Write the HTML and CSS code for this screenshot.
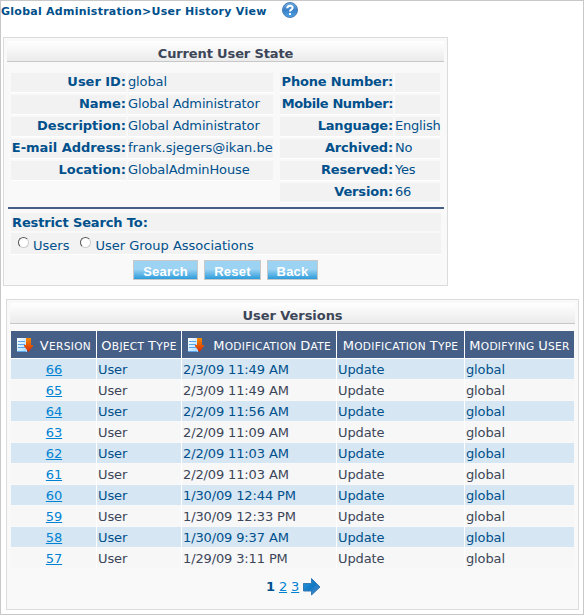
FILE: index.html
```html
<!DOCTYPE html>
<html lang="en">
<head>
<meta charset="utf-8">
<title>User History View</title>
<link rel="stylesheet" href="styles.css">
</head>
<body>
<svg width="0" height="0" class="defs">
  <defs>
    <linearGradient id="orange" x1="0" y1="0" x2="0" y2="1"><stop offset="0" stop-color="#f08a00"/><stop offset="1" stop-color="#d92800"/></linearGradient>
    <linearGradient id="sheet" x1="0" y1="0" x2="1" y2="1"><stop offset="0" stop-color="#ffffff"/><stop offset="1" stop-color="#a5d6fa"/></linearGradient>
    <linearGradient id="blue" x1="0" y1="0" x2="1" y2="1"><stop offset="0" stop-color="#2b9be0"/><stop offset=".5" stop-color="#1279c4"/><stop offset="1" stop-color="#5b8fd0"/></linearGradient>
    <linearGradient id="ball" x1="0" y1="0" x2="0" y2="1"><stop offset="0" stop-color="#74b0e4"/><stop offset=".5" stop-color="#3a80c8"/><stop offset="1" stop-color="#4fa6e4"/></linearGradient>
    <symbol id="sort" viewBox="0 0 16 15">
      <path d="M0 0h10v14H0z" fill="url(#sheet)"/>
      <path d="M1 3.500h7M1 6.500h7M1 9.500h7M0 13.500h9" stroke="#5aa5ea"/>
      <path d="M9 0h5v7h2v1l-4.500 6-4.500-6v-1h2z" fill="url(#orange)"/>
    </symbol>
  </defs>
</svg>
<div class="page">
  <header class="crumbs">
    <span class="trail">Global Administration&gt;User History View</span>
    <svg class="help" width="16" height="16" viewBox="0 0 16 16"><circle cx="8" cy="8" r="7.500" fill="url(#ball)" stroke="#4c7db5"/><path d="M5.300 6.200C5.300 2.800 10.800 3 10.600 6 10.400 7.700 8 7.700 8 9.600" fill="none" stroke="#fff" stroke-width="2"/><path d="M7 11h2v2H7z" fill="#fff"/></svg>
  </header>

  <section class="panel state">
    <h2 class="title">Current User State</h2>
    <div class="details">
      <dl class="fields left">
        <dt>User ID:</dt><dd>global</dd>
        <dt>Name:</dt><dd>Global Administrator</dd>
        <dt>Description:</dt><dd>Global Administrator</dd>
        <dt>E-mail Address:</dt><dd class="mail">frank.sjegers@ikan.be</dd>
        <dt>Location:</dt><dd>GlobalAdminHouse</dd>
      </dl>
      <dl class="fields right">
        <dt>Phone Number:</dt><dd></dd>
        <dt class="mobile">Mobile Number:</dt><dd></dd>
        <dt>Language:</dt><dd>English</dd>
        <dt>Archived:</dt><dd>No</dd>
        <dt>Reserved:</dt><dd>Yes</dd>
        <dt>Version:</dt><dd>66</dd>
      </dl>
    </div>
    <div class="search">
      <div class="restrict">Restrict Search To:</div>
      <div class="options">
        <label><input type="radio" name="scope">Users</label>
        <label><input type="radio" name="scope">User Group Associations</label>
      </div>
      <div class="buttons">
        <button class="b-search">Search</button><button class="b-reset">Reset</button><button class="b-back">Back</button>
      </div>
    </div>
  </section>

  <section class="panel versions">
    <h2 class="title">User Versions</h2>
    <table>
      <colgroup><col class="c1"><col class="c2"><col class="c3"><col class="c4"><col class="c5"></colgroup>
      <thead><tr>
        <th><div class="sortable"><svg width="16" height="15"><use href="#sort"/></svg><span><span class="word">Version</span></span></div></th>
        <th><span class="word">Object</span> <span class="word">Type</span></th>
        <th><div class="sortable"><svg width="16" height="15"><use href="#sort"/></svg><span><span class="word">Modification</span> <span class="word">Date</span></span></div></th>
        <th><span class="word">Modification</span> <span class="word">Type</span></th>
        <th><span class="word">Modifying</span> <span class="word">User</span></th>
      </tr></thead>
      <tbody>
        <tr><td><a href="#">66</a></td><td>User</td><td>2/3/09 11:49 AM</td><td>Update</td><td>global</td></tr>
        <tr><td><a href="#">65</a></td><td>User</td><td>2/3/09 11:49 AM</td><td>Update</td><td>global</td></tr>
        <tr><td><a href="#">64</a></td><td>User</td><td>2/2/09 11:56 AM</td><td>Update</td><td>global</td></tr>
        <tr><td><a href="#">63</a></td><td>User</td><td>2/2/09 11:09 AM</td><td>Update</td><td>global</td></tr>
        <tr><td><a href="#">62</a></td><td>User</td><td>2/2/09 11:03 AM</td><td>Update</td><td>global</td></tr>
        <tr><td><a href="#">61</a></td><td>User</td><td>2/2/09 11:03 AM</td><td>Update</td><td>global</td></tr>
        <tr><td><a href="#">60</a></td><td>User</td><td>1/30/09 12:44 PM</td><td>Update</td><td>global</td></tr>
        <tr><td><a href="#">59</a></td><td>User</td><td>1/30/09 12:33 PM</td><td>Update</td><td>global</td></tr>
        <tr><td><a href="#">58</a></td><td>User</td><td>1/30/09 9:37 AM</td><td>Update</td><td>global</td></tr>
        <tr><td><a href="#">57</a></td><td>User</td><td>1/29/09 3:11 PM</td><td>Update</td><td>global</td></tr>
      </tbody>
    </table>
    <nav class="pager"><b>1</b><a href="#">2</a><a href="#">3</a><svg width="18" height="18" viewBox="0 0 18 18"><path d="M.5 5.500h8v-5l8.500 8.500-8.500 8v-4h-8z" fill="url(#blue)" stroke="#3579b5"/></svg></nav>
  </section>
</div>
</body>
</html>
```
FILE: styles.css
```css
* { box-sizing: border-box; }
body { margin: 0; background: #fff; color: #00508c; font: 13px/19px "DejaVu Sans", Verdana, sans-serif; letter-spacing: -0.13px; }
.defs { display: block; }
.page { height: 615px; border: 1px solid #c8c8c8; }
.crumbs { display: flex; height: 36px; align-items: flex-start; }
.trail { width: 281px; font-weight: bold; font-size: 11px; line-height: 21px; letter-spacing: 0.26px; white-space: nowrap; }
.help { margin-top: 1px; }
.panel { border: 1px solid #dcdcdc; background: #f9f9f9; padding: 3px; }
.state { width: 445px; height: 249px; margin-left: 2px; }
.versions { width: 573px; height: 311px; margin: 13px 0 0 5px; }
.title { margin: 0; height: 21px; border-bottom: 1px solid #c8c8c8; background: linear-gradient(#fff, #ebebeb); color: #3c4658; font-size: 13px; line-height: 26px; text-align: center; letter-spacing: -0.13px; }
.versions .title { letter-spacing: -0.05px; }
.details { display: flex; gap: 7px; align-items: flex-start; height: 145px; padding: 11px 0 0 4px; }
.fields { display: grid; margin: 0; grid-auto-rows: 20px; gap: 2px; white-space: nowrap; }
.left { grid-template-columns: 115px 145px; }
.right { grid-template-columns: 113px 45px; }
dt, dd { margin: 0; background: #f2f2f2; border-bottom: 1px solid #fff; line-height: 18px; }
dt { font-weight: bold; text-align: right; letter-spacing: -0.03px; }
.right dt { letter-spacing: -0.18px; }
.right .mobile { letter-spacing: -0.4px; }
.right dd { letter-spacing: -0.2px; }
.mail { letter-spacing: -0.02px; }
.search { margin-left: 1px; border-top: 2px solid #465f87; padding: 4px 3px 0; }
.restrict { height: 18px; background: #f2f2f2; padding-left: 1px; font-weight: bold; line-height: 19px; }
.options { display: flex; height: 22px; margin-top: 2px; padding-left: 7px; background: #f2f2f2; border-bottom: 1px solid #fff; line-height: 25px; gap: 11px; letter-spacing: 0; }
label { display: flex; gap: 4px; }
input { appearance: none; width: 11px; height: 11px; margin: 4px 0 0; border: 1px solid; border-color: #555 #ccc #ccc #555; border-radius: 50%; background: #fff; }
.buttons { display: flex; gap: 6px; padding: 5px 0 0 122px; }
button { height: 20px; padding: 2px 0 0; border: 1px solid #c8c8c8; background: linear-gradient(#9cd3f3 45%, #2c9cdb); color: #fff; font: bold 13px/17px "Liberation Sans", Arial, sans-serif; letter-spacing: 0.2px; }
.b-search { width: 65px; }
.b-reset { width: 57px; }
.b-back { width: 51px; }
table { table-layout: fixed; width: 563px; margin: 7px 0 0 1px; border-collapse: separate; border-spacing: 0; white-space: nowrap; }
.c1 { width: 86px; }
.c2 { width: 85px; }
.c3 { width: 155px; }
.c4 { width: 128px; }
.c5 { width: 109px; }
th, td { padding: 2px 0 0 1px; border-right: 1px solid #fff; border-bottom: 1px solid #fff; }
th:last-child, td:last-child { border-right: 0; }
th { height: 28px; padding: 2px 0 0; background: #465f87; color: #fff; font-weight: normal; font-size: 10.6px; line-height: 24px; letter-spacing: 0.3px; }
.word { display: inline-block; text-transform: uppercase; }
.word::first-letter { font-size: 13px; }
.sortable { display: flex; align-items: center; justify-content: space-between; padding: 0 5px 0 6px; }
td { height: 21px; line-height: 18px; background: #f7f7f7; color: #3c4658; border-bottom-color: #f9f9f9; }
tr:nth-child(odd) td { background: #d6e6f2; color: #00508c; }
td:first-child { text-align: center; }
a { color: #0082d2; text-decoration: underline; }
.pager { display: flex; align-items: center; gap: 4px; height: 18px; margin: 8px 0 0 256px; }
.pager svg { margin-top: 1px; }
```
